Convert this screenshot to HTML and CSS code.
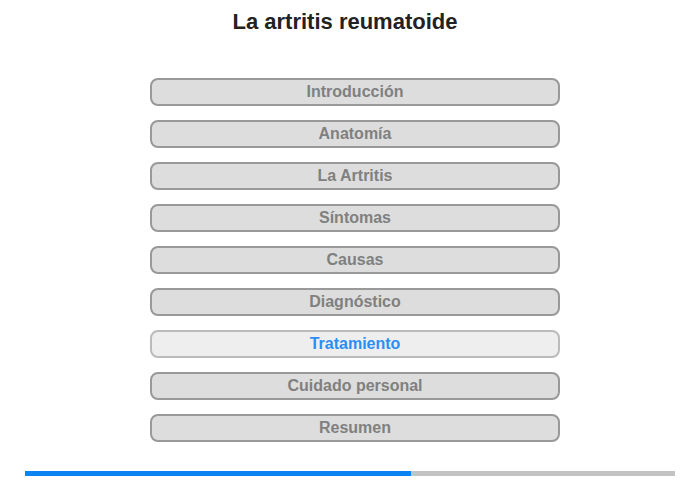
FILE: index.html
```html
<!DOCTYPE html>
<html lang="es">
<head>
    <meta charset="UTF-8">
    <title>La artritis reumatoide</title>
    <link rel="stylesheet" href="styles.css">
</head>
<body>
    <h1 class="title">La artritis reumatoide</h1>
    <div class="menu">
        <a class="menu-item" href="#">Introducción</a>
        <a class="menu-item" href="#">Anatomía</a>
        <a class="menu-item" href="#">La Artritis</a>
        <a class="menu-item" href="#">Síntomas</a>
        <a class="menu-item" href="#">Causas</a>
        <a class="menu-item" href="#">Diagnóstico</a>
        <a class="menu-item active" href="#">Tratamiento</a>
        <a class="menu-item" href="#">Cuidado personal</a>
        <a class="menu-item" href="#">Resumen</a>
    </div>
    <div class="progress">
        <div class="progress-fill" style="width: 59.4%"></div>
    </div>
</body>
</html>
```

FILE: styles.css
```css
body {
    font-family: "Liberation Sans", Arial, sans-serif;
    margin: 0;
    padding: 0;
    width: 700px;
    height: 480px;
    background: #fff;
}
.title {
    font-size: 22px;
    font-weight: bold;
    color: #222;
    text-align: center;
    margin: 0;
    padding: 9px 10px 0 0;
    line-height: 26px;
}
.menu {
    display: flex;
    flex-direction: column;
    gap: 14px;
    width: 410px;
    margin: 43px 0 0 150px;
}
.menu-item {
    display: block;
    height: 28px;
    box-sizing: border-box;
    border: 2px solid #999;
    border-radius: 8px;
    background-color: #ddd;
    color: #808080;
    font-size: 16px;
    font-weight: bold;
    text-align: center;
    line-height: 24px;
    text-decoration: none;
}
.menu-item.active {
    background-color: #eee;
    border-color: #bbb;
    color: #2b8ef5;
}
.progress {
    width: 650px;
    height: 5px;
    margin: 29px 0 0 25px;
    background-color: #c3c3c3;
}
.progress-fill {
    height: 100%;
    background-color: #0a84f0;
}
```
